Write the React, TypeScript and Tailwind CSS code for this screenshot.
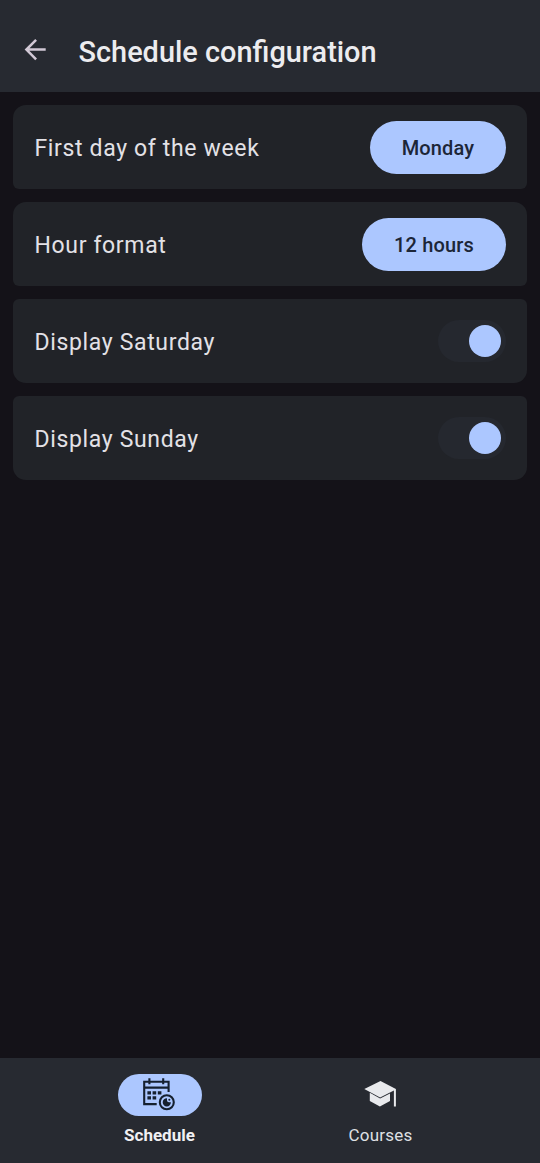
import type { ReactNode } from "react";

function BackArrow() {
  return (
    <svg width="32" height="32" viewBox="0 0 32 32" fill="none" stroke="#d2c9d6" strokeWidth="2.5">
      <path d="M26.7 15.6H8.1M17.1 5.9L7.4 15.6L17.1 25.3" />
    </svg>
  );
}

function CalendarIcon() {
  return (
    <svg width="36" height="34" viewBox="0.8 0.4 36 34" fill="none" stroke="#15202f" strokeWidth="2.1">
      <path d="M27.4 14.5V4.2H3V26.5H15.5M3 10H27.4M8.2 0.6V6.6M22 0.6V6.6" />
      <path
        d="M6.2 13.6h3.6v3.4H6.2zM11.4 13.6h3.6v3.4h-3.6zM16.6 13.6h3.6v3.4h-3.6zM6.2 18.6h3.6v3.4H6.2zM11.4 18.6h3.6v3.4h-3.6z"
        fill="#15202f"
        stroke="none"
      />
      <circle cx="25.6" cy="24.6" r="7" />
      <path d="M25.8 20.6A4.1 4.1 0 1 0 29.7 24.6H27.8A2 2 0 0 1 25.8 22.6Z" fill="#15202f" stroke="none" />
      <circle cx="28.1" cy="22.2" r="1" fill="#15202f" stroke="none" />
    </svg>
  );
}

function CapIcon() {
  return (
    <svg width="34" height="28" viewBox="0.7 0.4 34 28" fill="#e9eaed">
      <path d="M17.2 0.4L32.6 8.5V25.8H30.6V9.9L16.8 17L1 8.5Z" />
      <path d="M6.5 12.2V20.3L16.6 25.8L26.7 20.3V12.8L16.8 18Z" />
    </svg>
  );
}

function Row({ label, shape, children }: { label: string; shape: string; children: ReactNode }) {
  return (
    <div className={`flex h-[84px] items-center justify-between bg-[#212328] pr-[21px] pl-[21.5px] ${shape}`}>
      <span className="pt-[3px] text-[23px] leading-8 tracking-[0.65px] text-[#e3e1e6]">{label}</span>
      {children}
    </div>
  );
}

function Pill({ label, width }: { label: string; width: string }) {
  return (
    <button className={`flex h-[53px] items-center justify-center rounded-full bg-[#acc7ff] pt-[2px] text-[20px] font-medium tracking-[0.15px] text-[#1c2638] ${width}`}>
      {label}
    </button>
  );
}

function Toggle() {
  return (
    <button role="switch" aria-checked="true" className="flex h-[42px] w-[68px] items-center justify-end rounded-full bg-[#25282f] pr-[5px]">
      <span className="size-8 rounded-full bg-[#acc7ff]" />
    </button>
  );
}

export default function App() {
  const top = "rounded-t-[13px] rounded-b-[6px]";
  const bottom = "rounded-t-[6px] rounded-b-[13px]";
  return (
    <div className="flex h-[1163px] w-[540px] flex-col bg-[#141218] font-['Roboto',sans-serif]">
      <header className="flex h-[92px] items-center bg-[#272a31] pt-[12px] pl-[19px]">
        <div className="pb-[4px]">
          <BackArrow />
        </div>
        <h1 className="ml-[27.5px] text-[28.9px] leading-9 font-medium text-[#ececef]">Schedule configuration</h1>
      </header>
      <main className="flex flex-1 flex-col gap-[13px] px-[13px] pt-[13px]">
        <Row label="First day of the week" shape={top}>
          <Pill label="Monday" width="w-[136px]" />
        </Row>
        <Row label="Hour format" shape={top}>
          <Pill label="12 hours" width="w-[144px]" />
        </Row>
        <Row label="Display Saturday" shape={bottom}>
          <Toggle />
        </Row>
        <Row label="Display Sunday" shape={bottom}>
          <Toggle />
        </Row>
      </main>
      <nav className="flex h-[105.5px] justify-center gap-[10px] bg-[#272a31] pt-[16px]">
        <button className="flex w-[211px] flex-col items-center">
          <span className="flex h-[42px] w-[84px] items-center justify-center rounded-full bg-[#acc7ff]">
            <CalendarIcon />
          </span>
          <span className="mt-[7.5px] text-[17px] leading-6 font-bold text-[#f0f0f3]">Schedule</span>
        </button>
        <button className="flex w-[211px] flex-col items-center">
          <span className="flex h-[42px] w-[84px] items-center justify-center">
            <CapIcon />
          </span>
          <span className="mt-[7.5px] text-[17px] leading-6 tracking-[0.25px] text-[#dfe0e4]">Courses</span>
        </button>
      </nav>
    </div>
  );
}
